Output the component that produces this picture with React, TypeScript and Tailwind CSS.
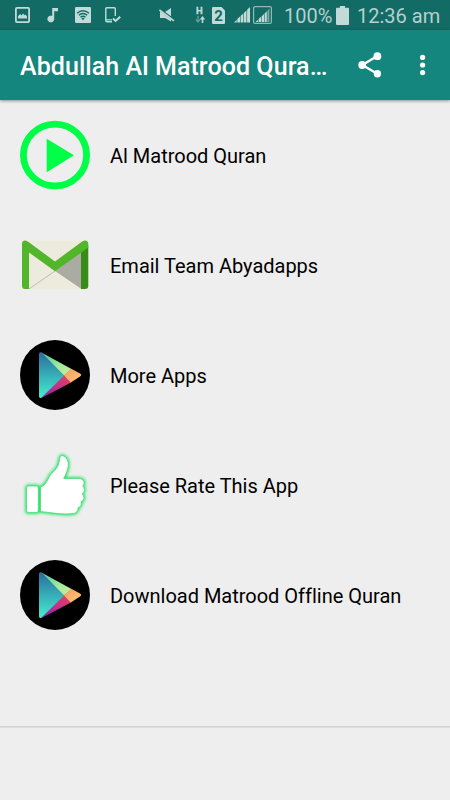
import type { ReactNode } from 'react';

interface MenuItem {
  label: string;
  icon: ReactNode;
}

const PictureIcon = () => (
  <svg width="15" height="16" viewBox="0 0 15 16" fill="none">
    <rect x="0.9" y="0.9" width="13.2" height="14.2" rx="1" stroke="#c2dad8" strokeWidth="1.8" />
    <path d="M3 11.5V9.2L5.2 7L6.6 8.4L8 6.6L9.5 8.2L10.5 7.5L12 9.5V11.5Z" fill="#c2dad8" />
  </svg>
);

const MusicIcon = () => (
  <svg width="12" height="16" viewBox="0 0 12 16" fill="#c2dad8">
    <path d="M5.2 1H11V4.2H7.2V12A3.4 3.4 0 1 1 5.2 8.9Z" />
  </svg>
);

const WifiIcon = () => (
  <svg width="16" height="16" viewBox="0 0 16 16" fill="none">
    <rect width="16" height="16" rx="1.2" fill="#c2dad8" />
    <g stroke="#126b65" strokeWidth="1.4">
      <path d="M2 6.2Q8 1.2 14 6.2" />
      <path d="M3.8 8.3Q8 4.6 12.2 8.3" />
      <path d="M5.5 10.3Q8 8 10.5 10.3" />
    </g>
    <path d="M6.4 11.4Q8 10.2 9.6 11.4L8 13.3Z" fill="#126b65" />
  </svg>
);

const DeviceIcon = () => (
  <svg width="16" height="16" viewBox="0 0 16 16" fill="none" stroke="#c2dad8">
    <path d="M10.3 9V1.8Q10.3.8 9.3.8H1.8Q.8.8.8 1.8V13.8Q.8 14.8 1.8 14.8H7" strokeWidth="1.4" />
    <path d="M1 12.8H7" strokeWidth="1.2" />
    <path d="M8 11.5L10.6 14L15.2 9.8" strokeWidth="2" />
  </svg>
);

const MuteIcon = () => (
  <svg width="16" height="16" viewBox="0 0 16 16">
    <path d="M1 5H6L12 1V14.6L6 11H1Z" fill="#c2dad8" />
    <path d="M0 2L15.5 13.4" stroke="#126b65" strokeWidth="2.6" />
    <path d="M.4 3L15 13.9" stroke="#c2dad8" strokeWidth="1.7" />
  </svg>
);

const DataIcon = () => (
  <svg width="11" height="18" viewBox="0 0 11 18">
    <text x="1" y="8" fill="#c2dad8" stroke="#c2dad8" strokeWidth="0.3" fontSize="9.5" fontWeight="700" fontFamily="Roboto, sans-serif">H</text>
    <path d="M3 10V15M1 13.5L3 16L5 13.5" fill="none" stroke="#5c9b96" strokeWidth="1.4" />
    <path d="M7.5 17V12" stroke="#c2dad8" strokeWidth="1.6" />
    <path d="M4.8 13.4L7.5 10L10.2 13.4Z" fill="#c2dad8" />
  </svg>
);

const SimIcon = () => (
  <svg width="13" height="17" viewBox="0 0 13 17">
    <path d="M1 0H9.5L13 3.5V16Q13 17 12 17H1Q0 17 0 16V1Q0 0 1 0Z" fill="#c2dad8" />
    <text x="6.5" y="13.8" textAnchor="middle" fill="#126b65" fontSize="15" fontWeight="700" fontFamily="Roboto, sans-serif">2</text>
  </svg>
);

const SignalIcon = () => (
  <svg width="16" height="16" viewBox="0 0 16 16" fill="#c2dad8">
    <path d="M0 15.5L2.7 12.8V15.5ZM3.3 12L6 9.6V15.5H3.3ZM6.6 9L9.3 6.4V15.5H6.6ZM9.9 6L12.5 3.4V15.5H9.9ZM13.1 2.8L16 0V15.5H13.1Z" />
  </svg>
);

const BoxedSignalIcon = () => (
  <svg width="19" height="18" viewBox="0 0 19 18">
    <rect x="0.6" y="0.6" width="17.8" height="16.8" rx="1.5" fill="none" stroke="#91bab7" strokeWidth="1.2" />
    <path d="M2.6 16L5 13.8V16ZM5.6 13L8 10.8V16H5.6ZM8.6 10.4L11 8V16H8.6ZM11.6 7.4L13.8 5.2V16H11.6Z" fill="#c2dad8" />
    <path d="M14.4 4.8L16.4 2.5V16H14.4Z" fill="#78aaa6" />
  </svg>
);

const BatteryIcon = () => (
  <svg width="13" height="19" viewBox="0 0 13 19" fill="#c2dad8">
    <path d="M4 0H9V1.8H12Q13 1.8 13 2.8V18Q13 19 12 19H1Q0 19 0 18V2.8Q0 1.8 1 1.8H4Z" />
  </svg>
);

const ShareIcon = () => (
  <svg width="24" height="26" viewBox="0 0 24 26" fill="#fff">
    <path d="M19.3 4L4.3 13L19.3 21.8" fill="none" stroke="#fff" strokeWidth="2.4" />
    <circle cx="4.2" cy="13" r="3.9" />
    <circle cx="19.4" cy="4.2" r="3.9" />
    <circle cx="19.4" cy="21.7" r="3.7" />
  </svg>
);

const MoreIcon = () => (
  <svg width="6" height="22" viewBox="0 0 6 22" fill="#fff">
    <circle cx="2.6" cy="3.4" r="2.6" />
    <circle cx="2.6" cy="11" r="2.6" />
    <circle cx="2.6" cy="18.6" r="2.6" />
  </svg>
);

const PlayIcon = () => (
  <svg width="70" height="70" viewBox="0 0 70 70">
    <ellipse cx="35" cy="35" rx="31.6" ry="30.9" fill="none" stroke="#00ff47" strokeWidth="6.8" />
    <path d="M26.7 18.8L54 35.3L26.7 52.2Z" fill="#00ff47" />
  </svg>
);

const MailIcon = () => (
  <svg width="70" height="70" viewBox="0 0 70 70">
    <rect x="2" y="10.5" width="66" height="48.5" rx="3" fill="#edebde" />
    <path d="M35 41L61.5 21V59H61.5Z" fill="#aaaba2" />
    <path d="M35 41L9 59" stroke="#b5b5ab" strokeWidth="0.9" />
    <path d="M61 22L68.3 16V56Q68.3 59 65 59H61Z" fill="#378d17" />
    <path d="M2 14Q2 10.5 5 10.5Q6.8 10.5 8.5 12L35 31.5L61.5 12Q63.2 10.5 65 10.5Q68.3 10.5 68.3 14V17.5L35 41.2L9 22.5V59H5Q2 59 2 56Z" fill="#51b629" />
  </svg>
);

const StoreIcon = ({ id }: { id: string }) => (
  <svg width="70" height="70" viewBox="0 0 70 70">
    <defs>
      <linearGradient id={`${id}-blue`} x1="0" y1="0" x2="0" y2="1">
        <stop offset="0" stopColor="#286b9f" />
        <stop offset="0.45" stopColor="#36a8b4" />
        <stop offset="1" stopColor="#45edcf" />
      </linearGradient>
      <linearGradient id={`${id}-green`} x1="0" y1="0" x2="1" y2="1">
        <stop offset="0" stopColor="#43c5a0" />
        <stop offset="0.6" stopColor="#a5eb9d" />
        <stop offset="1" stopColor="#d5e991" />
      </linearGradient>
      <linearGradient id={`${id}-pink`} x1="0" y1="1" x2="1" y2="0">
        <stop offset="0" stopColor="#9614bd" />
        <stop offset="0.55" stopColor="#c93383" />
        <stop offset="1" stopColor="#e5415d" />
      </linearGradient>
      <linearGradient id={`${id}-orange`} x1="0" y1="0" x2="1" y2="1">
        <stop offset="0" stopColor="#fa9b61" />
        <stop offset="1" stopColor="#f8ca76" />
      </linearGradient>
    </defs>
    <circle cx="35" cy="35" r="35" fill="#000" />
    <path d="M20.5 12L51.5 29L44 36Z" fill={`url(#${id}-green)`} />
    <path d="M44 34.5L51.5 42.3L21 58.2Z" fill={`url(#${id}-pink)`} />
    <path d="M51.2 28.8L60 33.6Q62.3 35 60 36.5L50.8 42.4L44 35.5Z" fill={`url(#${id}-orange)`} />
    <path d="M19 14Q19 11.4 21.5 12.5L44.2 35.5L22 57.2Q19 59.5 19 56Z" fill={`url(#${id}-blue)`} />
  </svg>
);

const ThumbIcon = () => (
  <svg width="70" height="70" viewBox="0 0 70 70" className="overflow-visible">
    <defs>
      <filter id="thumb-glow" x="-20%" y="-20%" width="140%" height="140%">
        <feGaussianBlur stdDeviation="1.5" />
      </filter>
      <g id="thumb-shape">
        <rect x="6.5" y="36" width="11.8" height="26.5" rx="2" />
        <path d="M20.5 37C26 36 28 28 31.5 23.5C38 18 38.5 15 39.7 9C40 4.5 43.5 5.2 45.8 7.5C50.5 12.5 48 20.5 43.7 28.5H59C64 28.5 65.5 33.5 62.7 36C65.5 38.5 64.5 42.5 62 43.8C65 46.5 64.5 50.5 61 51.7C62 55 60 57.5 58 57.5C58.5 61 56 63 53.5 63.5C43 65 31 62.5 20.5 61.5Z" />
      </g>
    </defs>
    <use href="#thumb-shape" fill="#28e66b" stroke="#28e66b" strokeWidth="3" filter="url(#thumb-glow)" />
    <use href="#thumb-shape" fill="#fff" stroke="#55d77b" strokeWidth="0.8" strokeLinejoin="round" />
  </svg>
);

const menuItems: MenuItem[] = [
  { label: 'Al Matrood Quran', icon: <PlayIcon /> },
  { label: 'Email Team Abyadapps', icon: <MailIcon /> },
  { label: 'More Apps', icon: <StoreIcon id="more" /> },
  { label: 'Please Rate This App', icon: <ThumbIcon /> },
  { label: 'Download Matrood Offline Quran', icon: <StoreIcon id="download" /> },
];

function StatusBar() {
  return (
    <div className="flex h-[30px] shrink-0 items-center bg-[#126b65] pl-[15px] text-[20px] leading-none text-[#b5d0ce]">
      <PictureIcon />
      <div className="ml-[17px]"><MusicIcon /></div>
      <div className="ml-4"><WifiIcon /></div>
      <div className="ml-3.5"><DeviceIcon /></div>
      <div className="ml-[38px]"><MuteIcon /></div>
      <div className="ml-5"><DataIcon /></div>
      <div className="ml-1.5"><SimIcon /></div>
      <div className="ml-[9px]"><SignalIcon /></div>
      <div className="ml-[3px]"><BoxedSignalIcon /></div>
      <span className="ml-3 w-[49px] whitespace-nowrap pt-0.5">100%</span>
      <div className="ml-[3px]"><BatteryIcon /></div>
      <span className="ml-2 whitespace-nowrap pt-0.5">12:36 am</span>
    </div>
  );
}

function AppBar() {
  return (
    <header className="z-10 flex h-[70px] shrink-0 items-center bg-[#14867e] pl-5 text-white shadow-[0_1px_3px_rgba(0,0,0,0.4)]">
      <h1 className="w-[308px] whitespace-nowrap pt-1 text-[25px] font-medium leading-8 tracking-[0.07px]">
        Abdullah Al Matrood Qura…
      </h1>
      <button className="ml-[30px]" aria-label="Share"><ShareIcon /></button>
      <button className="ml-[38px]" aria-label="More options"><MoreIcon /></button>
    </header>
  );
}

export default function App() {
  return (
    <div className="flex h-[800px] w-[450px] flex-col overflow-hidden bg-[#eeeeee] font-['Roboto',sans-serif]">
      <StatusBar />
      <AppBar />
      <ul className="h-[626px] shrink-0">
        {menuItems.map((item) => (
          <li key={item.label} className="flex h-[110px] items-center gap-5 px-5">
            {item.icon}
            <span className="whitespace-nowrap pt-0.5 text-[20px] leading-6 tracking-[-0.01px] text-black">{item.label}</span>
          </li>
        ))}
      </ul>
      <div className="h-0.5 shrink-0 border-t border-[#d3d3d3] bg-[#dfdfdf]" />
    </div>
  );
}
